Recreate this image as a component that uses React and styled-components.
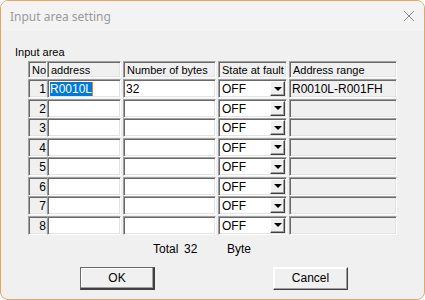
import styled, { createGlobalStyle } from 'styled-components';

const Global = createGlobalStyle`
  html, body {
    margin: 0;
    padding: 0;
    background: #ffffff;
  }
`;

const Window = styled.div`
  width: 425px;
  height: 300px;
  box-sizing: border-box;
  border: 1px solid #e2a768;
  border-radius: 8px;
  overflow: hidden;
  background: #f0f0f0;
  display: flex;
  flex-direction: column;
  font-family: 'Liberation Sans', Arial, sans-serif;
  font-size: 11px;
  color: #000;
`;

const TitleBar = styled.div`
  height: 30px;
  flex: none;
  background: #f3f3f3;
  display: flex;
  align-items: center;
  justify-content: space-between;
  padding: 0 9px 0 9px;
  font-family: 'Noto Sans', 'Open Sans', sans-serif;
  font-size: 12px;
  color: #9a9a9a;
`;

const Body = styled.div`
  flex: 1;
  padding: 15px 0 0 14px;
  display: flex;
  flex-direction: column;
`;

const Label = styled.div`
  font-size: 11px;
  line-height: 13px;
  margin-bottom: 2px;
`;

const Table = styled.div`
  display: grid;
  grid-template-columns: 19px 74px 2px 93px 2px 69px 2px 108px;
  grid-template-rows: 17px repeat(8, 19.57px);
  margin-left: 13px;
  align-items: start;
`;

const sunken = `
  box-sizing: border-box;
  border-top: 1px solid #a0a0a0;
  border-left: 1px solid #a0a0a0;
  border-right: 1px solid #ffffff;
  border-bottom: 1px solid #ffffff;
  box-shadow: inset 1px 1px 0 #696969, inset -1px -1px 0 #e3e3e3;
`;

const Head = styled.div`
  ${sunken}
  grid-column: ${(p) => p.col};
  height: 17px;
  padding: 1px 0 0 3px;
  background: #f0f0f0;
  white-space: nowrap;
  overflow: hidden;
  line-height: 14px;
`;

const NoCell = styled.div`
  ${sunken}
  grid-column: 1;
  height: 19px;
  margin-top: 1px;
  text-align: right;
  padding: 2px 1px 0 0;
  line-height: 14px;
  font-size: 12px;
  background: #f0f0f0;
  border-right: none;
`;

const Field = styled.div`
  ${sunken}
  grid-column: ${(p) => p.col};
  height: 19px;
  margin-top: 1px;
  background: ${(p) => (p.$gray ? '#f0f0f0' : '#ffffff')};
  padding: 2px 0 0 2px;
  line-height: 14px;
  font-size: 12px;
  white-space: nowrap;
  overflow: hidden;
  display: flex;
  align-items: flex-start;
`;

const Selected = styled.span`
  background: #0078d7;
  color: #fff;
  border-right: 1px solid #f08020;
`;

const Select = styled(Field)`
  justify-content: space-between;
  padding-right: 1px;
  padding-left: 3px;
`;

const Arrow = styled.div`
  width: 15px;
  height: 15px;
  box-sizing: border-box;
  margin-top: -1px;
  background: #f0f0f0;
  border-top: 1px solid #ffffff;
  border-left: 1px solid #ffffff;
  border-right: 1px solid #404040;
  border-bottom: 1px solid #404040;
  box-shadow: inset -1px -1px 0 #a0a0a0;
  display: flex;
  align-items: center;
  justify-content: center;

  &::after {
    content: '';
    border-left: 4px solid transparent;
    border-right: 4px solid transparent;
    border-top: 4px solid #000;
  }
`;

const Total = styled.div`
  display: flex;
  font-size: 12px;
  margin: 7px 0 0 138px;
  line-height: 14px;

  span:nth-child(1) { width: 31px; }
  span:nth-child(2) { width: 43px; }
`;

const Buttons = styled.div`
  display: flex;
  gap: 118px;
  margin: 11px 0 0 65px;
`;

const Button = styled.button`
  width: 75px;
  height: 23px;
  box-sizing: border-box;
  background: #f0f0f0;
  font-family: 'Liberation Sans', Arial, sans-serif;
  font-size: 12px;
  color: #000;
  padding: 0;
  border-top: 1px solid ${(p) => (p.$def ? '#696969' : '#ffffff')};
  border-left: 1px solid ${(p) => (p.$def ? '#696969' : '#ffffff')};
  border-right: ${(p) => (p.$def ? '2px' : '1px')} solid #404040;
  border-bottom: ${(p) => (p.$def ? '2px' : '1px')} solid #404040;
  box-shadow: inset -1px -1px 0 #a0a0a0, inset 1px 1px 0 #ffffff;
`;

const rows = [1, 2, 3, 4, 5, 6, 7, 8];

const App = () => {
  return (
    <>
      <Global />
      <Window>
        <TitleBar>
          <span>Input area setting</span>
          <svg width="12" height="12" viewBox="0 0 12 12">
            <path d="M1 1 L11 11 M11 1 L1 11" stroke="#8a8a8a" strokeWidth="1" />
          </svg>
        </TitleBar>
        <Body>
          <Label>Input area</Label>
          <Table>
            <Head col={1}>No</Head>
            <Head col={2}>address</Head>
            <Head col={4}>Number of bytes</Head>
            <Head col={6}>State at fault</Head>
            <Head col={8}>Address range</Head>
            {rows.map((n) => (
              <div key={n} style={{ display: 'contents' }}>
                <NoCell>{n}</NoCell>
                <Field col={2}>{n === 1 && <Selected>R0010L</Selected>}</Field>
                <Field col={4}>{n === 1 ? '32' : ''}</Field>
                <Select col={6}>
                  <span>OFF</span>
                  <Arrow />
                </Select>
                <Field col={8} $gray>{n === 1 ? 'R0010L-R001FH' : ''}</Field>
              </div>
            ))}
          </Table>
          <Total>
            <span>Total</span>
            <span>32</span>
            <span>Byte</span>
          </Total>
          <Buttons>
            <Button $def>OK</Button>
            <Button>Cancel</Button>
          </Buttons>
        </Body>
      </Window>
    </>
  );
};

export default App;
